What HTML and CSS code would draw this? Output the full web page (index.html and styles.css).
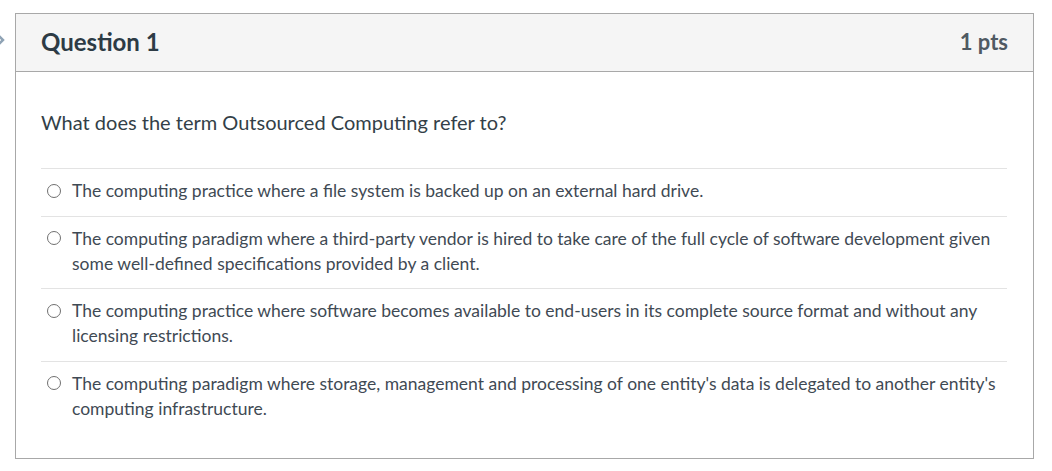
FILE: index.html
```html
<!DOCTYPE html>
<html>
<head>
<meta charset="utf-8">
<link rel="stylesheet" href="styles.css">
</head>
<body>
<div class="page">
  <svg class="flag" width="8" height="14" viewBox="0 0 8 14"><path d="M-2 2 L3 7 L-2 12" fill="none" stroke="#8fa3b5" stroke-width="2.5"/></svg>
  <div class="question">
    <div class="q-header">
      <h2 class="q-title">Question 1</h2>
      <span class="q-points">1 pts</span>
    </div>
    <div class="q-body">
      <p class="q-text">What does the term Outsourced Computing refer to?</p>
      <div class="answers">
        <label class="answer"><span class="radio"></span><span class="a-text">The computing practice where a file system is backed up on an external hard drive.</span></label>
        <label class="answer"><span class="radio"></span><span class="a-text">The computing paradigm where a third-party vendor is hired to take care of the full cycle of software development given some well-defined specifications provided by a client.</span></label>
        <label class="answer"><span class="radio"></span><span class="a-text">The computing practice where software becomes available to end-users in its complete source format and without any licensing restrictions.</span></label>
        <label class="answer"><span class="radio"></span><span class="a-text">The computing paradigm where storage, management and processing of one entity's data is delegated to another entity's computing infrastructure.</span></label>
      </div>
    </div>
  </div>
</div>
</body>
</html>
```

FILE: styles.css
```css
html, body {
  margin: 0;
  padding: 0;
  background: #ffffff;
}
body {
  font-family: Lato, "Open Sans", "Liberation Sans", sans-serif;
  color: #2d3b45;
}
.page {
  position: relative;
  padding: 13px 0 0 15px;
}
.flag {
  position: absolute;
  left: 0;
  top: 33px;
}
.question {
  width: 1017px;
  border: 1px solid #a8a8a8;
}
.q-header {
  display: flex;
  justify-content: space-between;
  align-items: center;
  height: 57px;
  padding: 0 25px;
  background: #f5f5f5;
  border-bottom: 1px solid #a8a8a8;
}
.q-title {
  margin: 0 0 2px;
  font-size: 24px;
  font-weight: 700;
  color: #2d3b45;
}
.q-points {
  margin-bottom: 2px;
  font-size: 22px;
  font-weight: 700;
  color: #4f5a63;
}
.q-body {
  padding: 36px 26px 25px 25px;
}
.q-text {
  margin: 0 0 32px;
  font-size: 20px;
  line-height: 28px;
  color: #333f48;
}
.answer {
  display: flex;
  align-items: flex-start;
  border-top: 1px solid #e3e3e3;
  padding: 9px 0 12.5px 5px;
  font-size: 17.5px;
  line-height: 25px;
  color: #3f4a54;
}
.radio {
  flex: none;
  width: 12px;
  height: 12px;
  border: 1.3px solid #707070;
  border-radius: 50%;
  margin: 5.5px 11px 0 1px;
  box-sizing: content-box;
}
.a-text {
  flex: 1;
}
```
